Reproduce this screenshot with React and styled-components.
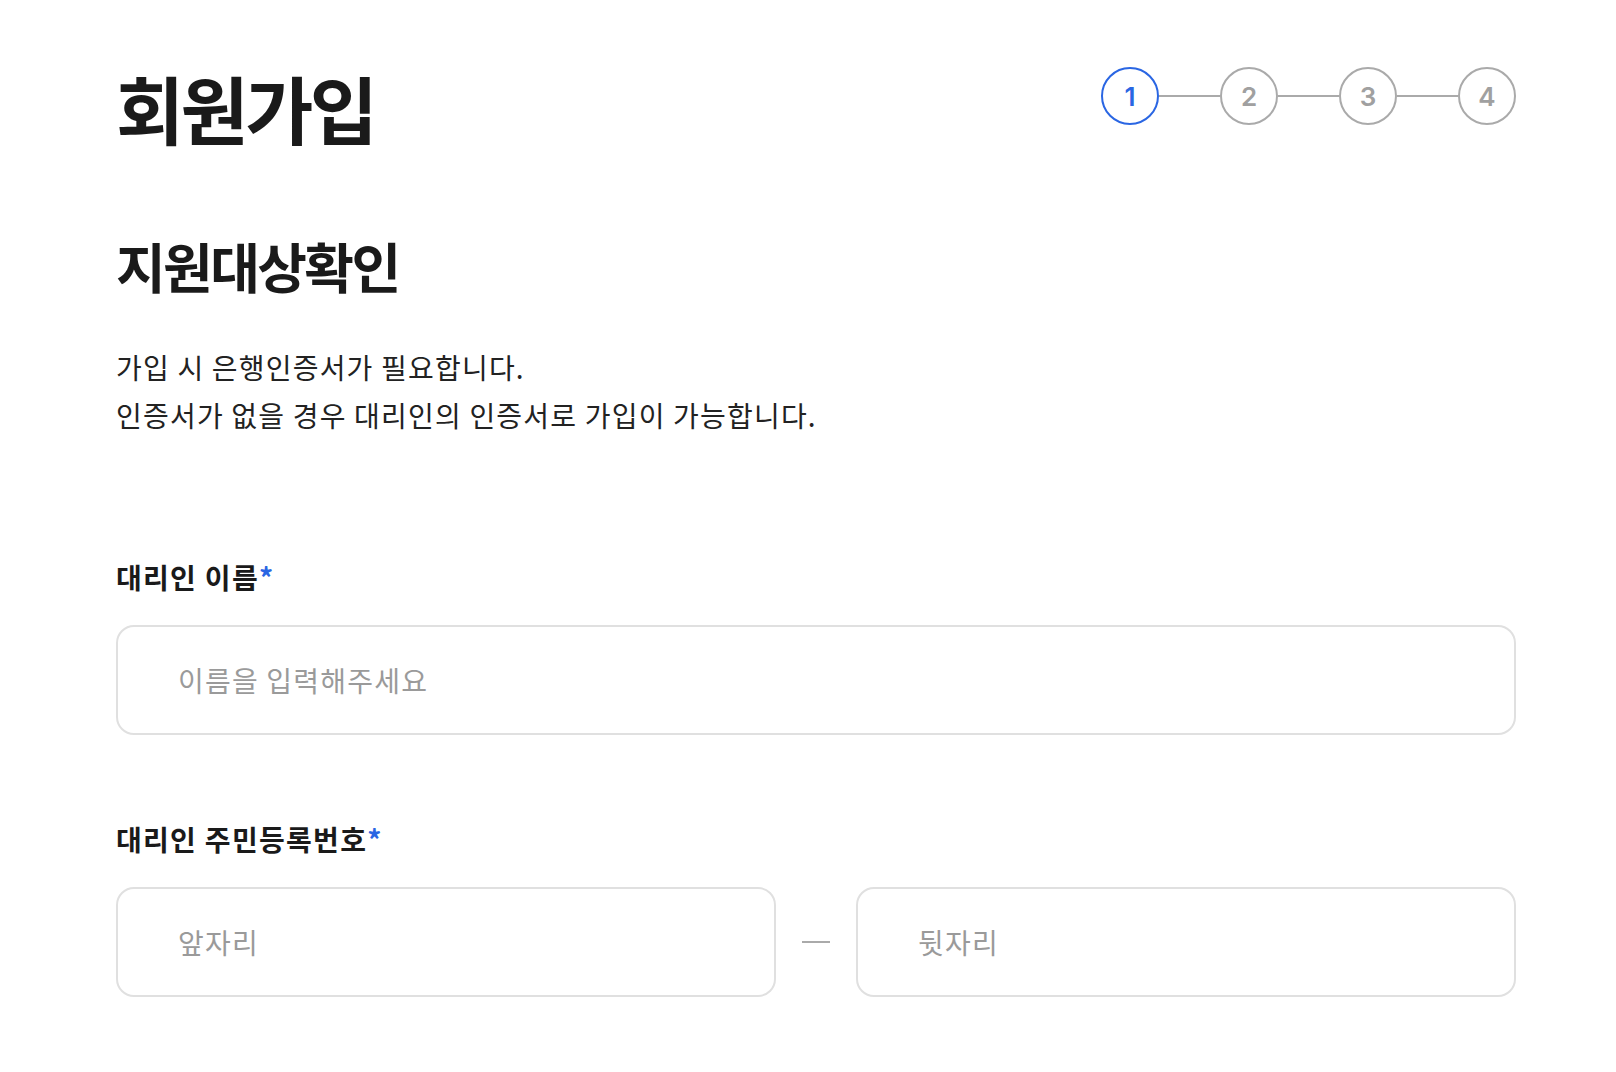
import React from "react";
import styled, { createGlobalStyle } from "styled-components";

const STEPS = [1, 2, 3, 4];

const App = () => {
  const currentStep = 1;
  return (
    <>
      <GlobalStyle />
      <Page>
        <Header>
          <Title>회원가입</Title>
          <Stepper>
            {STEPS.map((step, index) => (
              <React.Fragment key={step}>
                {index > 0 && <StepLine />}
                <StepCircle active={step === currentStep}>{step}</StepCircle>
              </React.Fragment>
            ))}
          </Stepper>
        </Header>

        <SectionTitle>지원대상확인</SectionTitle>
        <Description>
          가입 시 은행인증서가 필요합니다.
          <br />
          인증서가 없을 경우 대리인의 인증서로 가입이 가능합니다.
        </Description>

        <Form>
          <Field>
            <Label htmlFor="agentName">
              대리인 이름<Required>*</Required>
            </Label>
            <TextInput id="agentName" type="text" placeholder="이름을 입력해주세요" />
          </Field>

          <Field>
            <Label htmlFor="agentIdFront">
              대리인 주민등록번호<Required>*</Required>
            </Label>
            <SplitRow>
              <TextInput id="agentIdFront" type="text" placeholder="앞자리" />
              <Dash />
              <TextInput id="agentIdBack" type="password" placeholder="뒷자리" />
            </SplitRow>
          </Field>
        </Form>
      </Page>
    </>
  );
};

export default App;

const GlobalStyle = createGlobalStyle`
  html, body {
    margin: 0;
    padding: 0;
    background: #ffffff;
  }
  body {
    font-family: "Noto Sans CJK KR", "Noto Sans", sans-serif;
    color: #1a1a1a;
  }
  * {
    box-sizing: border-box;
  }
`;

const Page = styled.main`
  width: 1400px;
  margin-left: 116px;
  padding: 67px 0 80px;
`;

const Header = styled.header`
  display: flex;
  justify-content: space-between;
  align-items: flex-start;
`;

const Title = styled.h1`
  margin: 4px 0 0;
  font-size: 74px;
  line-height: 72px;
  font-weight: 700;
  letter-spacing: -3.5px;
  color: #1a1a1a;
`;

const Stepper = styled.ol`
  display: flex;
  align-items: center;
  margin: 0;
  padding: 0;
  list-style: none;
`;

const StepCircle = styled.li`
  width: 58px;
  height: 58px;
  border-radius: 50%;
  border: 2px solid ${(props) => (props.active ? "#2a66e3" : "#aaaaaa")};
  display: flex;
  align-items: center;
  justify-content: center;
  font-family: Inter, "Noto Sans", sans-serif;
  font-size: 26px;
  font-weight: 600;
  color: ${(props) => (props.active ? "#2a66e3" : "#a0a0a0")};
`;

const StepLine = styled.span`
  width: 61px;
  height: 2px;
  background: #aaaaaa;
`;

const SectionTitle = styled.h2`
  margin: 96px 0 0;
  font-size: 54px;
  line-height: 54px;
  font-weight: 700;
  letter-spacing: -2.6px;
  color: #1a1a1a;
`;

const Description = styled.p`
  margin: 50px 0 0;
  font-size: 28px;
  line-height: 48px;
  font-weight: 400;
  letter-spacing: 1.2px;
  color: #222222;
`;

const Form = styled.div`
  display: flex;
  flex-direction: column;
  gap: 84px;
  margin-top: 118px;
`;

const Field = styled.div`
  display: flex;
  flex-direction: column;
  gap: 28px;
`;

const Label = styled.label`
  font-size: 28px;
  line-height: 40px;
  font-weight: 700;
  letter-spacing: 1.3px;
  color: #1a1a1a;
`;

const Required = styled.span`
  color: #2a66e3;
`;

const TextInput = styled.input`
  width: 100%;
  height: 110px;
  padding: 0 60px;
  border: 2px solid #e0e0e0;
  border-radius: 18px;
  background: #ffffff;
  font-family: "Noto Sans CJK KR", "Noto Sans", sans-serif;
  font-size: 28px;
  letter-spacing: 1.2px;
  color: #1a1a1a;
  outline: none;

  &::placeholder {
    color: #9a9a9a;
  }
`;

const SplitRow = styled.div`
  display: grid;
  grid-template-columns: 1fr 28px 1fr;
  align-items: center;
  column-gap: 26px;
`;

const Dash = styled.span`
  display: block;
  height: 2px;
  background: #aaaaaa;
`;
